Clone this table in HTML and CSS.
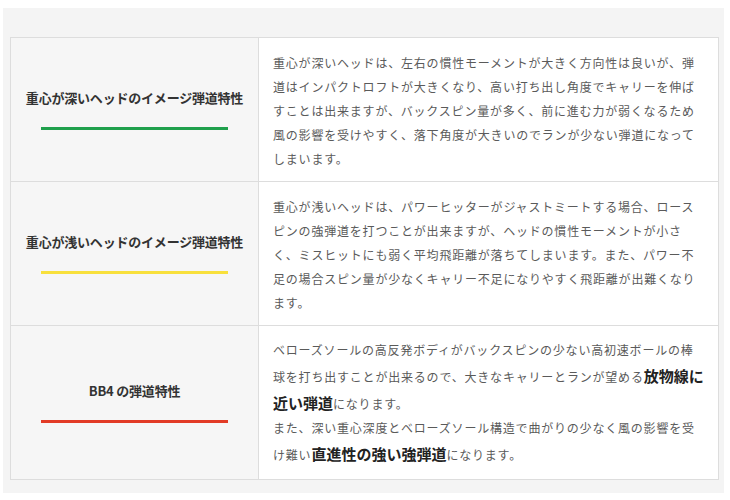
FILE: index.html
```html
<!DOCTYPE html>
<html lang="ja">
<head>
<meta charset="utf-8">
<link rel="stylesheet" href="styles.css">
</head>
<body>
<div class="panel">
  <table class="spec">
    <tr>
      <th class="label">
        <div class="title">重心が深いヘッドのイメージ弾道特性</div>
        <div class="bar bar-green"></div>
      </th>
      <td class="desc">重心が深いヘッドは、左右の慣性モーメントが大きく方向性は良いが、弾道はインパクトロフトが大きくなり、高い打ち出し角度でキャリーを伸ばすことは出来ますが、バックスピン量が多く、前に進む力が弱くなるため風の影響を受けやすく、落下角度が大きいのでランが少ない弾道になってしまいます。</td>
    </tr>
    <tr>
      <th class="label">
        <div class="title">重心が浅いヘッドのイメージ弾道特性</div>
        <div class="bar bar-yellow"></div>
      </th>
      <td class="desc">重心が浅いヘッドは、パワーヒッターがジャストミートする場合、ロースピンの強弾道を打つことが出来ますが、ヘッドの慣性モーメントが小さく、ミスヒットにも弱く平均飛距離が落ちてしまいます。また、パワー不足の場合スピン量が少なくキャリー不足になりやすく飛距離が出難くなります。</td>
    </tr>
    <tr>
      <th class="label">
        <div class="title">BB4 の弾道特性</div>
        <div class="bar bar-red"></div>
      </th>
      <td class="desc desc-last">ベローズソールの高反発ボディがバックスピンの少ない高初速ボールの棒球を打ち出すことが出来るので、大きなキャリーとランが望める<strong class="em">放物線に近い弾道</strong>になります。<br>また、深い重心深度とベローズソール構造で曲がりの少なく風の影響を受け難い<strong class="em">直進性の強い強弾道</strong>になります。</td>
    </tr>
  </table>
</div>
</body>
</html>
```

FILE: styles.css
```css
html, body {
  margin: 0;
  padding: 0;
  background: #ffffff;
}

body {
  font-family: "Noto Sans CJK JP", "Noto Sans", sans-serif;
}

.panel {
  margin: 8px 6px 0 3px;
  padding: 29px 5px 13px 7px;
  background: #f4f4f4;
}

.spec {
  width: 100%;
  border-collapse: collapse;
  table-layout: fixed;
}

.spec th,
.spec td {
  border: 1px solid #dddddd;
  box-sizing: border-box;
}

.label {
  width: 248px;
  background: #f6f6f6;
  text-align: center;
  vertical-align: middle;
  padding: 0 6px;
}

.title {
  font-size: 13px;
  font-weight: bold;
  color: #333333;
  line-height: 18px;
  letter-spacing: -0.2px;
}

.bar {
  width: 187px;
  height: 3px;
  margin: 20px auto 0;
}

.bar-green { background: #1fa04c; }
.bar-yellow { background: #f8e03c; }
.bar-red { background: #e23b26; }

.desc {
  background: #ffffff;
  color: #5a5a5a;
  font-size: 12px;
  line-height: 24px;
  letter-spacing: 0.8px;
  padding: 13px 12px 10px 14px;
  text-align: left;
  vertical-align: top;
}

.desc-last {
  padding-top: 12px;
  padding-bottom: 12px;
}

.em {
  font-size: 15px;
  line-height: 27px;
  font-weight: bold;
  color: #222222;
  letter-spacing: 0;
}
```
